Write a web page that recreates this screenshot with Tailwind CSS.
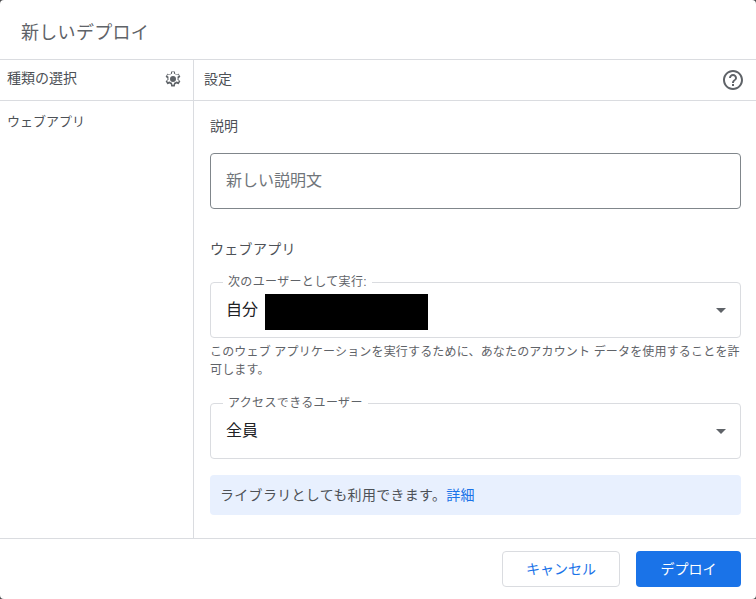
<!doctype html>
<html lang="ja">
  <head>
    <meta charset="UTF-8" />
    <meta name="viewport" content="width=device-width, initial-scale=1.0" />
    <title>新しいデプロイ</title>
    <script src="https://cdn.jsdelivr.net/npm/@tailwindcss/browser@4"></script>
  </head>
  <body class="bg-[#4a4b4d]">
    <div class="h-[599px] w-[756px] overflow-hidden rounded-[4px] bg-white text-[#4d5156] flex flex-col font-['Liberation_Sans','Noto_Sans_CJK_JP',sans-serif]">
      <header class="h-[60px] shrink-0 border-b border-[#dadce0] pl-[21px] pt-[20px] text-[18px] leading-[26px] tracking-[0.3px] text-[#5f6368]">新しいデプロイ</header>

      <div class="flex flex-1 min-h-0">
        <!-- left column -->
        <aside class="w-[194px] shrink-0 border-r border-[#dadce0]">
          <div class="h-[41px] border-b border-[#dadce0] pl-[7px] pr-[11px] pb-[3px] flex items-center justify-between text-[14px]">
            <span>種類の選択</span>
            <svg class="w-[18px] h-[18px] text-[#5f6368]" viewBox="0 0 24 24" fill="currentColor">
              <path d="M19.43 12.98c.04-.32.07-.64.07-.98s-.03-.66-.07-.98l2.11-1.65c.19-.15.24-.42.12-.64l-2-3.46c-.12-.22-.39-.3-.61-.22l-2.49 1c-.52-.4-1.08-.73-1.69-.98l-.38-2.65C14.46 2.18 14.25 2 14 2h-4c-.25 0-.46.18-.49.42l-.38 2.65c-.61.25-1.17.59-1.69.98l-2.49-1c-.23-.09-.49 0-.61.22l-2 3.46c-.13.22-.07.49.12.64l2.11 1.65c-.04.32-.07.65-.07.98s.03.66.07.98l-2.11 1.65c-.19.15-.24.42-.12.64l2 3.46c.12.22.39.3.61.22l2.49-1c.52.4 1.08.73 1.69.98l.38 2.65c.03.24.24.42.49.42h4c.25 0 .46-.18.49-.42l.38-2.65c.61-.25 1.17-.59 1.69-.98l2.49 1c.23.09.49 0 .61-.22l2-3.46c.12-.22.07-.49-.12-.64l-2.11-1.65zM12 19.5l-1-.01-.35-2.44-1.06-.43c-.43-.18-.83-.41-1.25-.73l-.9-.69-2.3.92-1-1.73 1.95-1.52-.15-1.13c-.03-.3-.06-.52-.06-.74s.03-.45.06-.73l.15-1.13-1.95-1.52 1-1.73 2.3.93.89-.68c.43-.32.83-.56 1.26-.73l1.06-.43.35-2.45h2l.35 2.44 1.06.43c.43.18.83.41 1.25.73l.9.69 2.3-.92 1 1.73-1.95 1.52.15 1.13c.03.3.06.52.06.74s-.03.45-.06.73l-.15 1.13 1.95 1.52-1 1.73-2.3-.93-.89.68c-.43.32-.83.56-1.26.73l-1.06.43-.35 2.45zM12 8a4 4 0 1 0 0 8 4 4 0 0 0 0-8z" />
            </svg>
          </div>
          <div class="pl-[7px] pt-[11px] text-[13px] leading-[20px]">ウェブアプリ</div>
        </aside>

        <!-- right column -->
        <main class="flex-1 min-w-0">
          <div class="h-[41px] border-b border-[#dadce0] pl-[10px] pr-[11px] flex items-center justify-between text-[14px]">
            <span class="-mt-[2px]">設定</span>
            <svg class="w-[24px] h-[24px] text-[#5f6368]" viewBox="0 0 24 24" fill="currentColor">
              <path d="M11 18h2v-2h-2v2zm1-16C6.48 2 2 6.48 2 12s4.48 10 10 10 10-4.48 10-10S17.52 2 12 2zm0 18c-4.41 0-8-3.59-8-8s3.59-8 8-8 8 3.59 8 8-3.59 8-8 8zm0-14c-2.21 0-4 1.79-4 4h2c0-1.1.9-2 2-2s2 .9 2 2c0 2-3 1.75-3 5h2c0-2.25 3-2.5 3-5 0-2.21-1.79-4-4-4z" />
            </svg>
          </div>

          <div class="pl-[16px] pr-[15px]">
            <div class="pt-[15px] text-[14px] leading-[20px]">説明</div>
            <div class="mt-[17px] h-[56px] rounded-[4px] border border-[#80868b] pl-[15px] flex items-center text-[16px] text-[#70757a]">新しい説明文</div>

            <div class="mt-[30px] text-[14px] leading-[20px] tracking-[0.3px]">ウェブアプリ</div>

            <div class="relative mt-[23px] h-[56px] rounded-[4px] border border-[#dadce0] pl-[15px] pr-[14px] flex items-center justify-between">
              <span class="absolute left-[12px] top-[-9px] bg-white px-[5px] text-[12px] leading-[16px] tracking-[0.35px] text-[#5f6368]">次のユーザーとして実行:</span>
              <div class="flex items-center text-[16px] text-[#202124]">
                <span>自分</span>
                <span class="ml-[7px] mt-[4px] h-[36px] w-[163px] bg-black"></span>
              </div>
              <span class="h-0 w-0 border-x-[5px] border-t-[5px] border-x-transparent border-t-[#5f6368]"></span>
            </div>
            <p class="mt-[5px] text-[12px] leading-[18px] tracking-[0.17px] text-[#5f6368]">このウェブ アプリケーションを実行するために、あなたのアカウント データを使用することを許可します。</p>

            <div class="relative mt-[24px] h-[56px] rounded-[4px] border border-[#dadce0] pl-[15px] pr-[14px] flex items-center justify-between">
              <span class="absolute left-[12px] top-[-9px] bg-white px-[5px] text-[12px] leading-[16px] tracking-[0.35px] text-[#5f6368]">アクセスできるユーザー</span>
              <span class="text-[16px] text-[#202124]">全員</span>
              <span class="h-0 w-0 border-x-[5px] border-t-[5px] border-x-transparent border-t-[#5f6368]"></span>
            </div>

            <div class="mt-[16px] h-[40px] rounded-[4px] bg-[#e8f0fe] pl-[10px] flex items-center text-[14px] tracking-[0.3px]">
              ライブラリとしても利用できます。<a href="#" class="text-[#1a73e8]">詳細</a>
            </div>
          </div>
        </main>
      </div>

      <footer class="h-[61px] shrink-0 border-t border-[#dadce0] pr-[15px] flex items-start justify-end gap-[16px] pt-[12px]">
        <button class="h-[36px] w-[118px] rounded-[4px] border border-[#dadce0] bg-white text-[14px] text-[#1a73e8]">キャンセル</button>
        <button class="h-[36px] w-[105px] rounded-[4px] bg-[#1a73e8] text-[14px] text-white">デプロイ</button>
      </footer>
    </div>
  </body>
</html>
